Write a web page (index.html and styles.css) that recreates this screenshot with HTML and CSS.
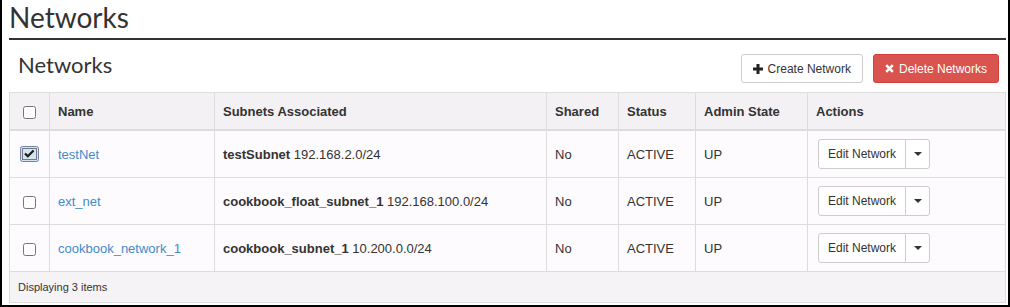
FILE: index.html
```html
<!DOCTYPE html>
<html lang="en">

<head>
    <meta charset="UTF-8">
    <meta name="viewport" content="width=device-width, initial-scale=1.0">
    <title>Networks</title>

    <link rel="stylesheet" href="styles.css">
</head>

<body>
    <div class="page">
        <h1 class="page-title">Networks</h1>

        <div class="table-bar">
            <h2 class="table-title">Networks</h2>
            <div class="table-actions">
                <button class="btn btn-default">
                    <svg class="icon" width="10" height="10" viewBox="0 0 10 10">
                        <path d="M3.5 0h3v3.5h3.5v3h-3.5v3.5h-3v-3.5h-3.5v-3h3.5z" fill="#222" />
                    </svg>
                    Create Network
                </button>
                <button class="btn btn-danger">
                    <svg class="icon" width="9" height="9" viewBox="0 0 9 9">
                        <path d="M1.2 1.2l6.6 6.6M7.8 1.2l-6.6 6.6" stroke="#fff" stroke-width="2.6" />
                    </svg>
                    Delete Networks
                </button>
            </div>
        </div>

        <table class="net-table">
            <colgroup>
                <col class="w-check">
                <col class="w-name">
                <col class="w-subnets">
                <col class="w-shared">
                <col class="w-status">
                <col class="w-admin">
                <col>
            </colgroup>
            <thead>
                <tr>
                    <th class="cell-check"><input type="checkbox"></th>
                    <th>Name</th>
                    <th>Subnets Associated</th>
                    <th>Shared</th>
                    <th>Status</th>
                    <th>Admin State</th>
                    <th>Actions</th>
                </tr>
            </thead>
            <tbody>
                <tr>
                    <td class="cell-check">
                        <svg class="checked" width="19" height="16" viewBox="0 0 19 16">
                            <rect x="0.5" y="0.5" width="18" height="15" rx="2" fill="#d6e3f2" stroke="#6f84a6" />
                            <rect x="2.5" y="2.5" width="14" height="11" fill="none" stroke="#111" stroke-dasharray="1 1" />
                            <path d="M5 7.5l2.8 2.8l5.8-5.8" fill="none" stroke="#1a1a1a" stroke-width="2.2" />
                        </svg>
                    </td>
                    <td><a href="#">testNet</a></td>
                    <td><b>testSubnet</b> 192.168.2.0/24</td>
                    <td>No</td>
                    <td>ACTIVE</td>
                    <td>UP</td>
                    <td>
                        <div class="btn-group">
                            <button class="btn btn-sm">Edit Network</button>
                            <button class="btn btn-sm btn-caret"><span class="caret"></span></button>
                        </div>
                    </td>
                </tr>
                <tr>
                    <td class="cell-check"><input type="checkbox"></td>
                    <td><a href="#">ext_net</a></td>
                    <td><b>cookbook_float_subnet_1</b> 192.168.100.0/24</td>
                    <td>No</td>
                    <td>ACTIVE</td>
                    <td>UP</td>
                    <td>
                        <div class="btn-group">
                            <button class="btn btn-sm">Edit Network</button>
                            <button class="btn btn-sm btn-caret"><span class="caret"></span></button>
                        </div>
                    </td>
                </tr>
                <tr>
                    <td class="cell-check"><input type="checkbox"></td>
                    <td><a href="#">cookbook_network_1</a></td>
                    <td><b>cookbook_subnet_1</b> 10.200.0.0/24</td>
                    <td>No</td>
                    <td>ACTIVE</td>
                    <td>UP</td>
                    <td>
                        <div class="btn-group">
                            <button class="btn btn-sm">Edit Network</button>
                            <button class="btn btn-sm btn-caret"><span class="caret"></span></button>
                        </div>
                    </td>
                </tr>
            </tbody>
            <tfoot>
                <tr>
                    <td colspan="7">Displaying 3 items</td>
                </tr>
            </tfoot>
        </table>
    </div>
</body>

</html>
```

FILE: styles.css
```css
* {
    margin: 0;
    padding: 0;
}

body {
    color: #333;
    font-size: 13px;
    background-color: #fff;
    font-family: "Liberation Sans", Arial, sans-serif;
}

.page {
    height: 307px;
    border: 2px solid #000;
    border-top: 0;
    box-sizing: border-box;
    padding: 0 2px 0 7px;
}

.page-title {
    font-size: 28px;
    font-weight: 400;
    line-height: 34px;
    padding-bottom: 4px;
    border-bottom: 2px solid #333;
    font-family: Lato, sans-serif;
}

.table-bar {
    display: flex;
    margin: 14px 7px 9px 9px;
    align-items: flex-start;
    justify-content: space-between;
}

.table-title {
    font-size: 22px;
    font-weight: 400;
    line-height: 21px;
    font-family: Lato, sans-serif;
}

.table-actions {
    display: flex;
    gap: 10px;
}

.btn {
    display: inline-flex;
    height: 29px;
    gap: 5px;
    padding: 0 10px;
    color: #333;
    font-size: 12px;
    cursor: pointer;
    align-items: center;
    border-radius: 3px;
    border: 1px solid #ccc;
    background-color: #fff;
    font-family: "Liberation Sans", Arial, sans-serif;
}

.btn-default {
    padding: 0 11px;
}

.btn-danger {
    padding: 0 11px;
    color: #fff;
    border-color: #d43f3a;
    background-color: #d9534f;
}

.icon {
    flex: none;
}

.net-table {
    width: 100%;
    table-layout: fixed;
    border-collapse: collapse;
}

.w-check {
    width: 40px;
}

.w-name {
    width: 165px;
}

.w-subnets {
    width: 332px;
}

.w-shared {
    width: 72px;
}

.w-status {
    width: 77px;
}

.w-admin {
    width: 112px;
}

th,
td {
    padding: 0 8px;
    text-align: left;
    border: 1px solid #ddd;
    vertical-align: middle;
}

thead th {
    height: 36px;
    font-weight: bold;
    border-bottom-width: 2px;
    background-color: #f4f1f4;
}

tbody td {
    height: 46px;
    background-color: #fdfbfd;
}

tfoot td {
    height: 30px;
    font-size: 11px;
    background-color: #f5f3f5;
}

.cell-check {
    padding: 0;
    text-align: center;
}

.cell-check input {
    margin: 0;
    width: 13px;
    height: 13px;
    vertical-align: middle;
}

.checked {
    display: block;
    margin: 0 auto;
}

a {
    color: #428bca;
    text-decoration: none;
}

.btn-group {
    display: inline-flex;
    margin-left: 2px;
    vertical-align: middle;
}

.btn-sm {
    height: 30px;
    padding: 0 9px;
    border-radius: 3px 0 0 3px;
}

.btn-caret {
    width: 25px;
    padding: 0;
    margin-left: -1px;
    justify-content: center;
    border-radius: 0 3px 3px 0;
}

.caret {
    width: 0;
    height: 0;
    border-top: 4px solid #333;
    border-left: 4px solid transparent;
    border-right: 4px solid transparent;
}
```
